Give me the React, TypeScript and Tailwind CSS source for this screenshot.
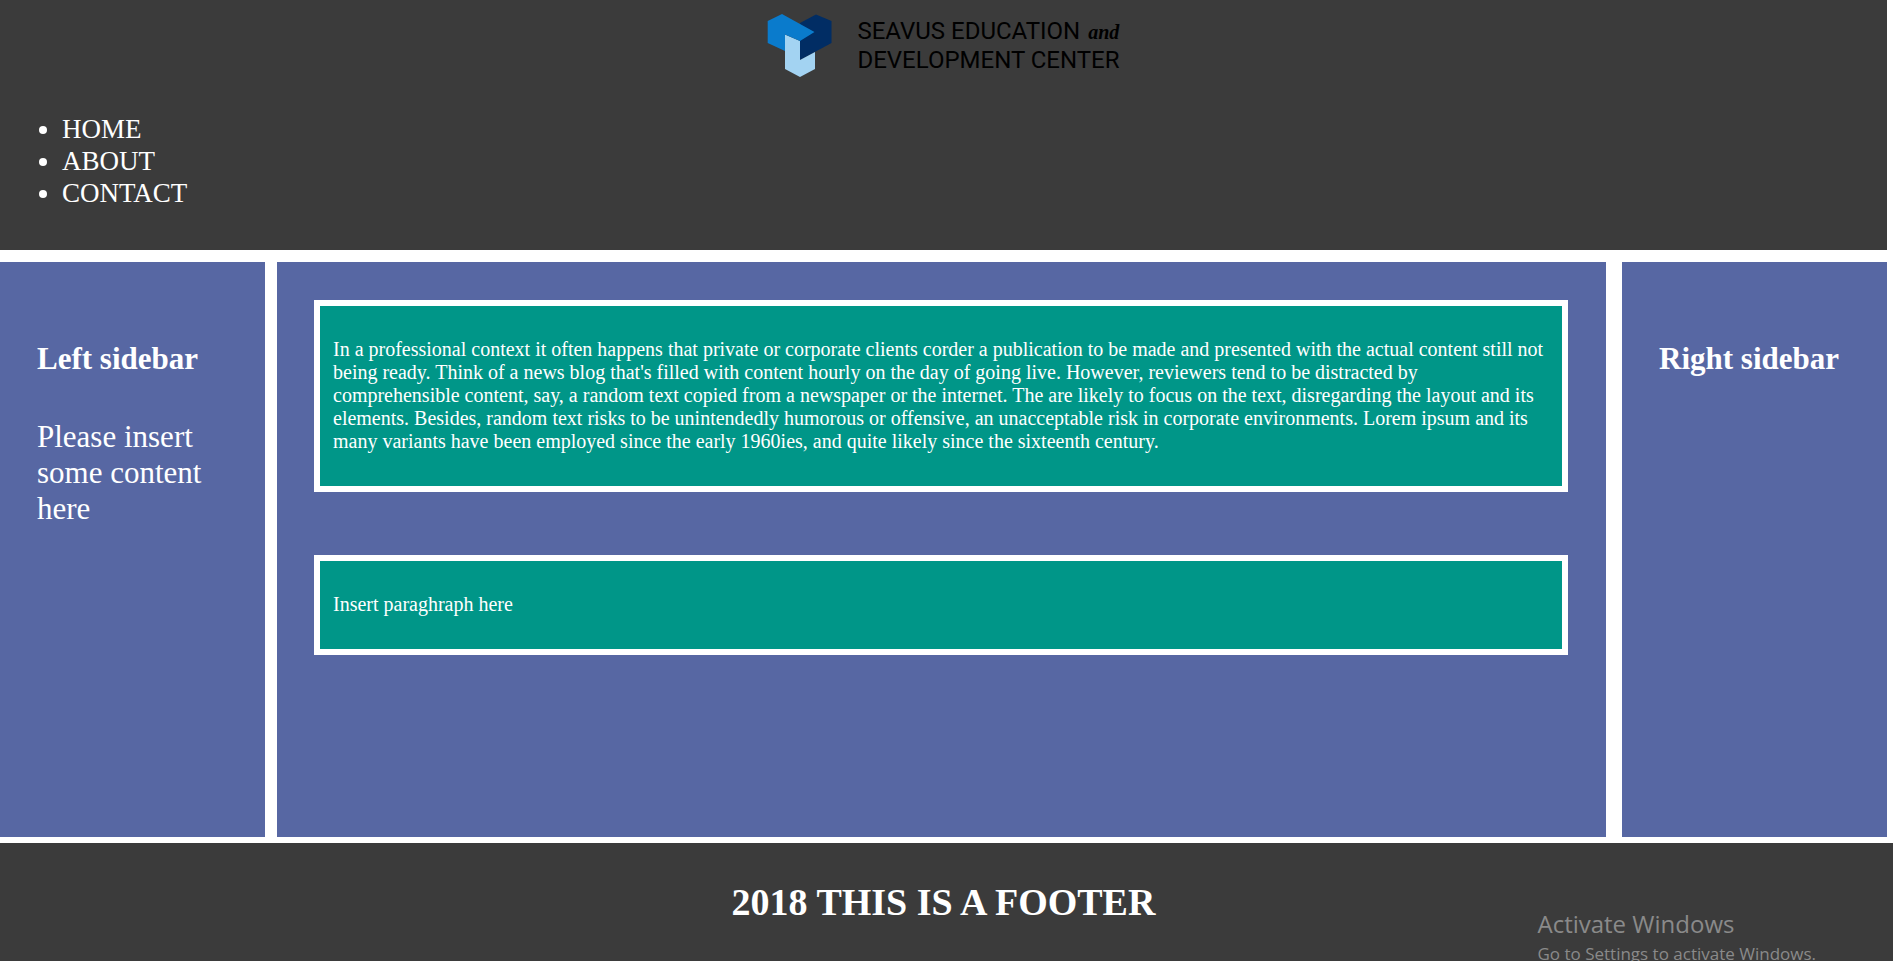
const navItems = ["HOME", "ABOUT", "CONTACT"];

const paragraphs = [
  "In a professional context it often happens that private or corporate clients corder a publication to be made and presented with the actual content still not being ready. Think of a news blog that's filled with content hourly on the day of going live. However, reviewers tend to be distracted by comprehensible content, say, a random text copied from a newspaper or the internet. The are likely to focus on the text, disregarding the layout and its elements. Besides, random text risks to be unintendedly humorous or offensive, an unacceptable risk in corporate environments. Lorem ipsum and its many variants have been employed since the early 1960ies, and quite likely since the sixteenth century.",
  "Insert paraghraph here",
];

function Logo() {
  return (
    <div className="flex items-start justify-center gap-6">
      <svg className="h-16 w-[66px]" viewBox="0 0 66 64" aria-hidden="true">
        <path d="M33 10 49 1.500 64.500 8V30L33 47V28Z" fill="#012d64" />
        <path d="M18 21.500 33 28V47L48 39V56L33 64 18 56Z" fill="#a3d3f2" />
        <path d="M0.700 8 15 1 47.500 19 33 28 18 21.500V38L0.700 30Z" fill="#0a7bcc" />
      </svg>
      <div className="pt-1 font-['Roboto',sans-serif] text-[24px] leading-7 text-black">
        <div className="flex items-baseline gap-2">
          <span>SEAVUS EDUCATION</span>
          <span className="font-['Liberation_Serif',serif] text-[20px] font-bold italic">and</span>
        </div>
        <div>DEVELOPMENT CENTER</div>
      </div>
    </div>
  );
}

export default function App() {
  return (
    <div className="relative h-screen overflow-hidden bg-white font-['Liberation_Serif','Times_New_Roman',serif] text-white">
      <header className="mr-[11px] h-[250px] bg-[#3b3b3b] pt-[13px]">
        <Logo />
        <nav className="pt-9">
          <ul className="list-disc pl-[62px] text-[27px] leading-8">
            {navItems.map((item) => (
              <li key={item}>
                <a href="#">{item}</a>
              </li>
            ))}
          </ul>
        </nav>
      </header>

      <div className="mt-3 mr-[11px] grid min-h-[575px] grid-cols-[265fr_1357fr_265fr]">
        <aside className="bg-[#5767a3] px-[37px] pt-[79px] text-[31px] leading-9">
          <h2 className="font-bold">Left sidebar</h2>
          <p className="mt-[42px]">Please insert some content here</p>
        </aside>
        <main className="mr-4 ml-3 flex flex-col gap-[63px] bg-[#5767a3] pt-[38px] pr-[38px] pl-[37px]">
          {paragraphs.map((text) => (
            <section
              key={text}
              className="border-[6px] border-white bg-[#009688] pt-8 pr-[18px] pb-[33px] pl-[13px] text-[20px] leading-[23px]"
            >
              <p>{text}</p>
            </section>
          ))}
        </main>
        <aside className="bg-[#5767a3] px-[37px] pt-[79px] text-[31px] leading-9">
          <h2 className="font-bold">Right sidebar</h2>
        </aside>
      </div>

      <footer className="mt-[6px] mr-[5px] h-[150px] bg-[#3b3b3b] pt-9 pr-[6px] text-center">
        <h1 className="text-[38px] leading-[46px] font-bold">2018 THIS IS A FOOTER</h1>
      </footer>

      <div className="absolute right-[82px] -bottom-[7px] font-['Open_Sans',sans-serif] text-[#8a8a8a]">
        <p className="text-[24px] leading-8">Activate Windows</p>
        <p className="text-[17px] leading-7">Go to Settings to activate Windows.</p>
      </div>
    </div>
  );
}
